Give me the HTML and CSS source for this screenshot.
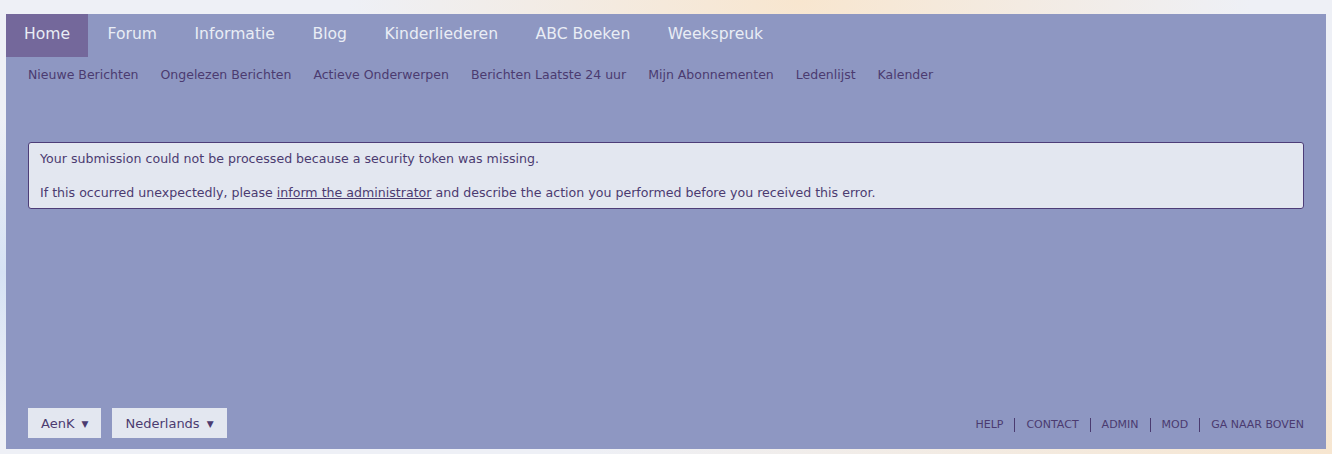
FILE: index.html
```html
<!DOCTYPE html>
<html lang="nl">
  <head>
    <meta charset="utf-8">
    <title>AenK - Informatie</title>
    <link rel="stylesheet" href="styles.css">
  </head>
  <body>
    <div id="wrap">
      <ul class="nav">
        <li class="active"><a href="#">Home</a></li>
        <li><a href="#">Forum</a></li>
        <li><a href="#">Informatie</a></li>
        <li><a href="#">Blog</a></li>
        <li><a href="#">Kinderliederen</a></li>
        <li><a href="#">ABC Boeken</a></li>
        <li><a href="#">Weekspreuk</a></li>
      </ul>
      <ul class="subnav">
        <li><a href="#">Nieuwe Berichten</a></li>
        <li><a href="#">Ongelezen Berichten</a></li>
        <li><a href="#">Actieve Onderwerpen</a></li>
        <li><a href="#">Berichten Laatste 24 uur</a></li>
        <li><a href="#">Mijn Abonnementen</a></li>
        <li><a href="#">Ledenlijst</a></li>
        <li><a href="#">Kalender</a></li>
      </ul>
      <div id="content">
        <div class="message">
          <p>Your submission could not be processed because a security token was missing.</p>
          <p>If this occurred unexpectedly, please <a href="#">inform the administrator</a> and describe the action you performed before you received this error.</p>
        </div>
      </div>
      <div id="footer">
        <div class="selects">
          <button>AenK <span class="caret">&#9660;</span></button>
          <button>Nederlands <span class="caret">&#9660;</span></button>
        </div>
        <ul class="links">
          <li><a href="#">HELP</a></li>
          <li><a href="#">CONTACT</a></li>
          <li><a href="#">ADMIN</a></li>
          <li><a href="#">MOD</a></li>
          <li><a href="#">GA NAAR BOVEN</a></li>
        </ul>
      </div>
    </div>
  </body>
</html>
```

FILE: styles.css
```css
html, body {
  height: 100%;
}

body {
  margin: 0;
  padding: 14px 6px 5px;
  box-sizing: border-box;
  font-family: 'DejaVu Sans', Verdana, sans-serif;
  color: #4b3b70;
  background-color: #eef0f6;
  background-image:
    radial-gradient(ellipse at 60% 0%, #f8e6cf 0%, rgba(248, 230, 207, 0) 40%),
    radial-gradient(ellipse at 0% 60%, #d6e2f4 0%, rgba(214, 226, 244, 0) 40%),
    radial-gradient(ellipse at 100% 100%, #f7e6d0 0%, rgba(247, 230, 208, 0) 40%);
}

a {
  color: inherit;
  text-decoration: none;
}

ul {
  list-style: none;
  margin: 0;
  padding: 0;
}

#wrap {
  height: 100%;
  background-color: #8e97c2;
  display: flex;
  flex-direction: column;
}

.nav {
  display: flex;
  gap: 1.5px;
  height: 43px;
}

.nav li a {
  display: block;
  height: 43px;
  line-height: 41px;
  padding: 0 18px;
  font-size: 15.6px;
  color: #e9edf5;
}

.nav li.active a {
  background-color: #74689b;
}

.subnav {
  display: flex;
  padding: 8px 0 0 11px;
}

.subnav li a {
  display: block;
  padding: 0 11px;
  line-height: 20px;
  font-size: 12.5px;
}

#content {
  padding: 57px 22px 0;
}

.message {
  background-color: #e3e7f0;
  border: 1px solid #4d3d78;
  border-radius: 3px;
  padding: 7px 11px 7px;
  font-size: 12.6px;
}

.message p {
  margin: 0;
  line-height: 17px;
}

.message p + p {
  margin-top: 17px;
}

.message a {
  text-decoration: underline;
}

#footer {
  margin-top: auto;
  display: flex;
  justify-content: space-between;
  align-items: center;
  padding: 0 22px 11px;
}

.selects {
  display: flex;
  gap: 11px;
}

button {
  font-family: 'DejaVu Sans', Verdana, sans-serif;
  font-size: 13px;
  color: #4b3b70;
  background-color: #e3e7f0;
  border: 0;
  height: 30px;
  padding: 0 13px;
}

.caret {
  font-size: 9px;
  margin-left: 3px;
  position: relative;
  top: -1px;
}

.links {
  display: flex;
  font-size: 11px;
  padding-top: 4px;
}

.links li {
  padding: 0 11px;
  border-left: 1px solid #4b3b70;
  line-height: 14px;
}

.links li:first-child {
  border-left: 0;
}

.links li:last-child {
  padding-right: 0;
}
```
